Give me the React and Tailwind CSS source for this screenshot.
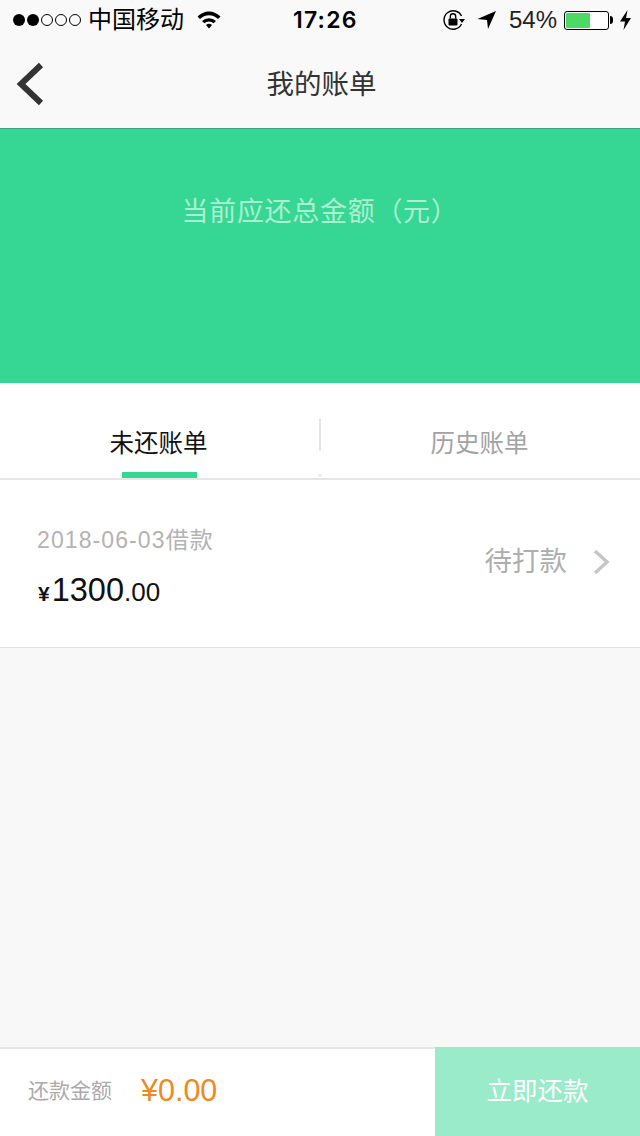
const font = { fontFamily: '"Liberation Sans", "Noto Sans CJK SC", sans-serif' };
const timeFont = { fontFamily: 'Inter, "Liberation Sans", sans-serif' };

function StatusBar() {
  return (
    <div className="relative flex h-10 items-center justify-between pl-[13px] pr-[9px] text-[24px] leading-none text-black">
      <div className="flex items-center">
        <div className="flex items-center gap-[2px]">
          <span className="h-[12px] w-[12px] rounded-full bg-black" />
          <span className="h-[12px] w-[12px] rounded-full bg-black" />
          <span className="h-[12px] w-[12px] rounded-full border border-black" />
          <span className="h-[12px] w-[12px] rounded-full border border-black" />
          <span className="h-[12px] w-[12px] rounded-full border border-black" />
        </div>
        <span className="ml-[7px]">中国移动</span>
        <svg className="ml-[13px]" width="24" height="18" viewBox="0 0 24 18">
          <path d="M0.5 5.5 A16 16 0 0 1 23.5 5.5 L21 8 A12.5 12.5 0 0 0 3 8 Z" fill="#000" />
          <path d="M5 10 A10 10 0 0 1 19 10 L16.6 12.3 A6.6 6.6 0 0 0 7.4 12.3 Z" fill="#000" />
          <path d="M9 14 A4.5 4.5 0 0 1 15 14 L12 17.5 Z" fill="#000" />
        </svg>
      </div>
      <span className="absolute left-[293px] top-[9px] text-[23px] font-semibold tracking-[1.2px]" style={timeFont}>17:26</span>
      <div className="flex items-center">
        <svg width="24" height="22" viewBox="0 0 24 22">
          <path d="M19.5 7 A9.2 9.2 0 1 0 19.5 15" fill="none" stroke="#000" strokeWidth="1.4" />
          <path d="M17 10 H23 L20 14 Z" fill="#000" />
          <rect x="6.5" y="9.5" width="9" height="7" rx="1" fill="#000" />
          <path d="M8.3 9.5 V7.5 A2.7 2.7 0 0 1 13.7 7.5 V9.5" fill="none" stroke="#000" strokeWidth="1.4" />
        </svg>
        <svg className="ml-[11px]" width="20" height="20" viewBox="0 0 20 20">
          <path d="M19 1 L11 19 L10 10 L0.5 9 Z" fill="#000" />
        </svg>
        <span className="ml-[12px] text-[#222]">54%</span>
        <div className="ml-[7px] h-[19px] w-[45px] rounded-[3px] border border-black bg-white p-[1px]">
          <div className="h-full w-[24px] rounded-[1px] bg-[#4cd964]" />
        </div>
        <span className="ml-[1px] h-[8px] w-[3px] rounded-r-full bg-black" />
        <svg className="ml-[7px]" width="11" height="20" viewBox="0 0 11 20">
          <path d="M7.5 0 L0 11.5 H5 L3.5 20 L11 8 H6 Z" fill="#000" />
        </svg>
      </div>
    </div>
  );
}

function NavBar() {
  return (
    <div className="relative flex h-[89px] items-center justify-center border-b border-[#3aa57f] pl-[3px] pt-[2px]">
      <svg className="absolute left-[15px] top-[22px]" width="30" height="44" viewBox="0 0 30 44">
        <path d="M26 3 L6 22 L26 41" fill="none" stroke="#333" strokeWidth="6" />
      </svg>
      <span className="text-[27.5px] leading-none text-[#333]">我的账单</span>
    </div>
  );
}

export default function App() {
  return (
    <div className="flex h-[1136px] w-[640px] flex-col overflow-hidden bg-[#f8f8f8]" style={font}>
      <div className="bg-[#f9f9f9]">
        <StatusBar />
        <NavBar />
      </div>

      <div className="flex h-[254px] justify-center bg-[#36d694] pt-[65px]">
        <span className="text-[27px] leading-[36px] tracking-[0.7px] text-[#aceed1]">当前应还总金额（元）</span>
      </div>

      <div className="relative flex h-[97px] border-b-2 border-[#e6e6e6] bg-white">
        <div className="relative flex flex-1 justify-center pr-[2px] pt-[44px]">
          <span className="text-[24.5px] leading-[34px] text-[#111]">未还账单</span>
          <span className="absolute bottom-0 left-[122px] h-[6px] w-[75px] bg-[#36d694]" />
        </div>
        <div className="mt-[36px] h-[32px] w-[2px] bg-[#e4e4e4]" />
        <div className="flex flex-1 justify-center pr-[2px] pt-[44px]">
          <span className="text-[24.5px] leading-[34px] text-[#a3a3a3]">历史账单</span>
        </div>
        <span className="absolute left-[318px] top-[91px] h-[3px] w-[4px] bg-[#f0f0f0]" />
      </div>

      <div className="flex h-[168px] items-center justify-between border-b border-[#e2e2e2] bg-white pl-[37px] pr-[28px]">
        <div className="mt-[11px] flex flex-col">
          <span className="text-[23px] leading-[30px] tracking-[1.1px] text-[#b3b3b3]">2018-06-03借款</span>
          <div className="mt-[15px] flex items-baseline leading-[40px] text-[#111]">
            <span className="ml-[1px] text-[21px] font-bold">¥</span>
            <span className="ml-[2px] text-[32.5px]">1300</span>
            <span className="text-[26px]">.00</span>
          </div>
        </div>
        <div className="-mt-[4px] flex items-center">
          <span className="text-[27.5px] leading-none text-[#aeaeae]">待打款</span>
          <svg className="ml-[25px]" width="20" height="28" viewBox="0 0 20 28">
            <path d="M3 3 L15 14 L3 25" fill="none" stroke="#c6c6c6" strokeWidth="3.5" />
          </svg>
        </div>
      </div>

      <div className="flex-1" />

      <div className="flex h-[89px] border-t-2 border-[#e6e6e6] bg-white">
        <div className="flex flex-1 items-center pb-[5px] pl-[28px]">
          <span className="text-[21px] leading-none text-[#aaaaaa]">还款金额</span>
          <span className="ml-[29px] text-[30.5px] leading-none text-[#ee8a1e]">¥0.00</span>
        </div>
        <div className="-mt-[2px] flex w-[205px] items-center justify-center bg-[#9aebc9]">
          <span className="text-[25.5px] leading-none text-white">立即还款</span>
        </div>
      </div>
    </div>
  );
}
